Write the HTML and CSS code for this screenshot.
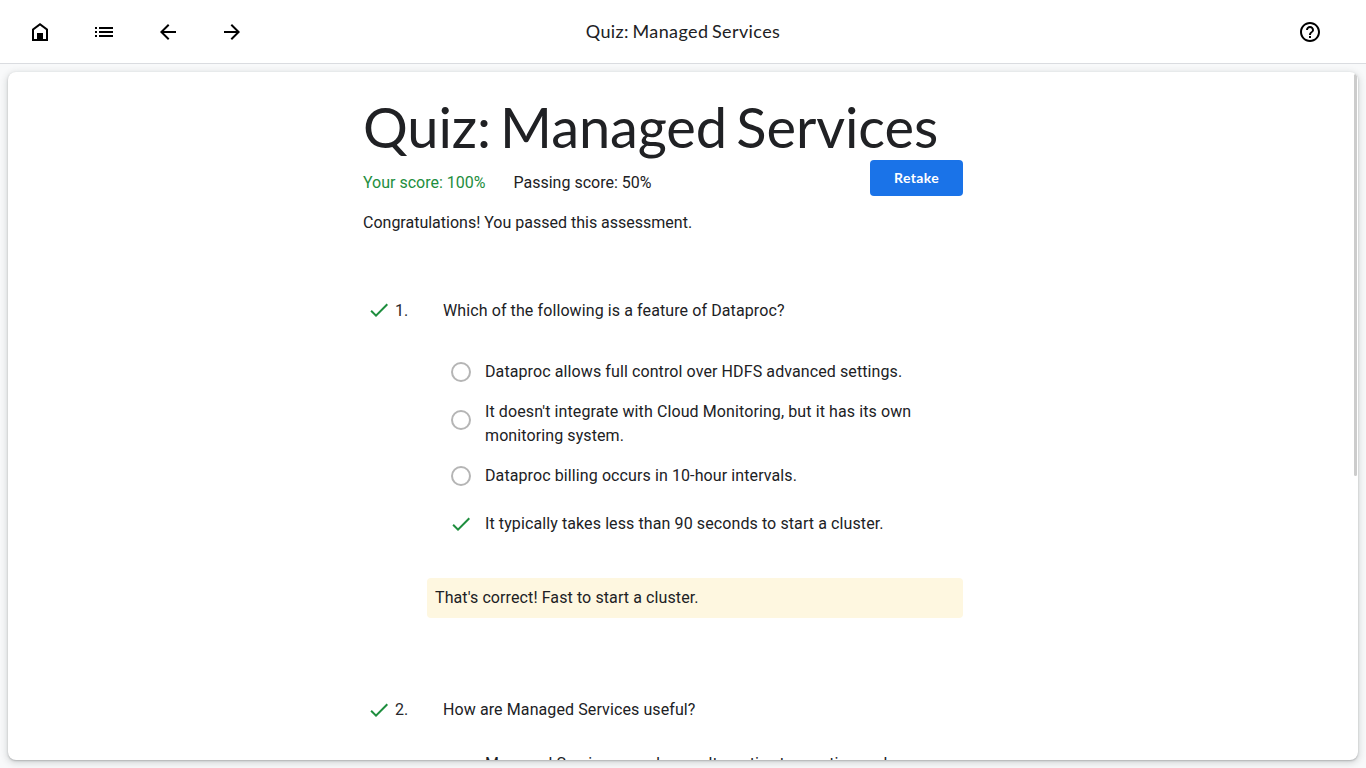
FILE: index.html
```html
<!DOCTYPE html>
<html lang="en">
<head>
<meta charset="utf-8">
<title>Quiz: Managed Services</title>
<link rel="stylesheet" href="styles.css">
</head>
<body>
<header class="toolbar">
  <nav class="nav">
    <svg class="icon" viewBox="0 0 24 24"><path d="M12 3l-8 6v12h16V9l-8-6zm6 16h-3v-6H9v6H6v-9l6-4.500 6 4.500V19z"/><path d="M9 13h6v7H9z"/></svg>
    <svg class="icon" viewBox="0 0 24 24"><path d="M3 7h2v2H3zM3 11h2v2H3zM3 15h2v2H3zM7 7h14v2H7zM7 11h14v2H7zM7 15h14v2H7z"/></svg>
    <svg class="icon" viewBox="0 0 24 24"><path d="M20 11H7.830l5.590-5.590L12 4l-8 8 8 8 1.410-1.410L7.830 13H20v-2z"/></svg>
    <svg class="icon" viewBox="0 0 24 24"><path d="M12 4l-1.410 1.410L16.170 11H4v2h12.170l-5.580 5.590L12 20l8-8z"/></svg>
  </nav>
  <div class="toolbar-title">Quiz: Managed Services</div>
  <div class="help"><svg class="icon" viewBox="0 0 24 24"><path d="M11 18h2v-2h-2v2zm1-16C6.480 2 2 6.480 2 12s4.480 10 10 10 10-4.480 10-10S17.520 2 12 2zm0 18c-4.410 0-8-3.590-8-8s3.590-8 8-8 8 3.590 8 8-3.590 8-8 8zm0-14c-2.210 0-4 1.790-4 4h2c0-1.100.9-2 2-2s2 .9 2 2c0 2-3 1.750-3 5h2c0-2.250 3-2.500 3-5 0-2.210-1.790-4-4-4z"/></svg></div>
</header>
<main class="card">
  <div class="content">
    <h1 class="heading">Quiz: Managed Services</h1>
    <div class="summary">
      <div class="scores"><span class="passed">Your score: 100%</span><span>Passing score: 50%</span></div>
      <button class="retake">Retake</button>
    </div>
    <p class="message">Congratulations! You passed this assessment.</p>
    <section class="question">
      <div class="prompt">
        <svg class="icon check raised" viewBox="0 0 24 24"><path d="M9 16.170L4.830 12l-1.420 1.410L9 19 21 7l-1.410-1.410z"/></svg>
        <span class="number">1.</span><span>Which of the following is a feature of Dataproc?</span>
      </div>
      <div class="options">
        <div class="option"><span class="radio"></span><span>Dataproc allows full control over HDFS advanced settings.</span></div>
        <div class="option two-line"><span class="radio"></span><span>It doesn't integrate with Cloud Monitoring, but it has its own<br>monitoring system.</span></div>
        <div class="option"><span class="radio"></span><span>Dataproc billing occurs in 10-hour intervals.</span></div>
        <div class="option"><svg class="icon check answer" viewBox="0 0 24 24"><path d="M9 16.170L4.830 12l-1.420 1.410L9 19 21 7l-1.410-1.410z"/></svg><span>It typically takes less than 90 seconds to start a cluster.</span></div>
      </div>
      <div class="feedback">That's correct! Fast to start a cluster.</div>
    </section>
    <section class="question">
      <div class="prompt">
        <svg class="icon check" viewBox="0 0 24 24"><path d="M9 16.170L4.830 12l-1.420 1.410L9 19 21 7l-1.410-1.410z"/></svg>
        <span class="number">2.</span><span>How are Managed Services useful?</span>
      </div>
      <div class="options next">
        <div class="option two-line"><span class="radio"></span><span>Managed Services may be an alternative to creating and</span></div>
      </div>
    </section>
  </div>
  <div class="scroll-thumb"></div>
</main>
</body>
</html>
```
FILE: styles.css
```css
* { box-sizing: border-box; }
body {
  margin: 0;
  height: 768px;
  overflow: hidden;
  display: flex;
  flex-direction: column;
  background: #f8f9fa;
  color: #202124;
  font: 16px/24px Roboto, "Liberation Sans", sans-serif;
}
.toolbar {
  height: 64px;
  flex: none;
  display: grid;
  grid-template-columns: 1fr auto 1fr;
  align-items: center;
  padding: 0 44px 0 28px;
  background: #fff;
  border-bottom: 1px solid #dadce0;
}
.nav { display: flex; gap: 40px; padding-top: 1px; }
.icon { width: 24px; height: 24px; display: block; flex: none; fill: #000; }
.toolbar-title {
  font: 18px/24px Lato, Roboto, sans-serif;
  letter-spacing: 0.4px;
  word-spacing: -1.5px;
  padding: 0 0 2px 16px;
}
.help { display: flex; justify-content: flex-end; padding-top: 1px; }
.card {
  position: relative;
  height: 688px;
  flex: none;
  margin: 8px 8px 0;
  overflow: hidden;
  background: #fff;
  border-radius: 8px;
  box-shadow: 0 1px 2px rgba(60, 64, 67, .3), 0 2px 6px 2px rgba(60, 64, 67, .15);
}
.content { width: 600px; margin-left: 355px; padding-top: 24px; }
.heading {
  margin: 0;
  height: 64px;
  font: 400 56px/62px Lato, Roboto, sans-serif;
  letter-spacing: -.1px;
  word-spacing: -5px;
  white-space: nowrap;
}
.summary { display: flex; justify-content: space-between; height: 36px; }
.scores { display: flex; gap: 28px; padding-top: 11px; }
.passed { color: #1e8e3e; }
.retake {
  width: 93px;
  height: 36px;
  padding: 0;
  border: 0;
  border-radius: 4px;
  background: #1a73e8;
  color: #fff;
  font: 700 14px/36px Lato, Roboto, sans-serif;
  letter-spacing: .35px;
}
.message { margin: 15px 0 64px; }
.question { letter-spacing: .1px; }
.prompt { display: flex; height: 24px; padding-left: 4px; align-items: center; }
.check { fill: #1e8e3e; }
.raised { margin-bottom: 2px; }
.answer { margin: 0 -2px; }
.number { width: 48px; margin-left: 4px; color: #27282b; }
.options { display: flex; flex-direction: column; padding: 25px 0 0 88px; }
.next { padding-top: 26px; }
.option { display: flex; align-items: center; gap: 14px; min-height: 48px; white-space: nowrap; }
.two-line { height: 48px; margin: 4px 0; align-items: flex-start; }
.two-line .radio { margin-top: 10px; }
.radio { width: 20px; height: 20px; flex: none; border: 2px solid #b5b5b5; border-radius: 50%; }
.feedback {
  height: 40px;
  margin: 30px 0 80px 64px;
  padding: 8px;
  background: #fef7e0;
  border-radius: 4px;
}
.scroll-thumb {
  position: absolute;
  top: 2px;
  right: 1px;
  width: 3px;
  height: 402px;
  border-radius: 2px;
  background: #ccc;
}
```
